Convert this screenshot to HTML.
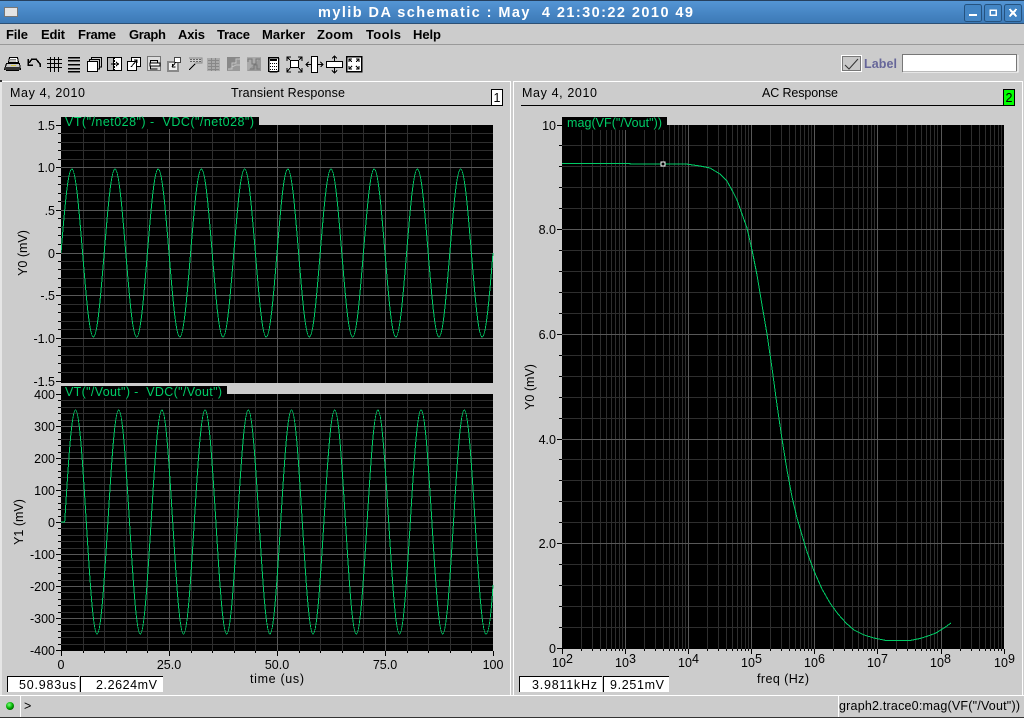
<!DOCTYPE html>
<html><head><meta charset="utf-8"><title>mylib DA schematic</title>
<style>
html,body{margin:0;padding:0;background:#ccc;width:1024px;height:718px;overflow:hidden}
svg{display:block}
text{font-family:"Liberation Sans",sans-serif;font-size:12.5px;fill:#000;white-space:pre}
.m{font-weight:bold;font-size:13px}
.g{fill:#00cc66;font-size:12.500px}
.r{text-anchor:end}
.c{text-anchor:middle}
</style></head><body>
<svg width="1024" height="718" viewBox="0 0 1024 718" xmlns="http://www.w3.org/2000/svg">
<defs><linearGradient id="tb" x1="0" y1="0" x2="0" y2="1"><stop offset="0" stop-color="#5596d6"/><stop offset="1" stop-color="#3b78b5"/></linearGradient>
<radialGradient id="led" cx=".4" cy=".35" r=".7"><stop offset="0" stop-color="#7dff7d"/><stop offset=".6" stop-color="#00b000"/><stop offset="1" stop-color="#005500"/></radialGradient>
<clipPath id="cl"><rect x="61" y="125" width="433" height="526"/></clipPath></defs>
<rect width="1024" height="718" fill="#cccccc"/>

<!-- title bar -->
<rect width="1024" height="24" fill="url(#tb)"/>
<rect width="1024" height="1" fill="#26405e"/>
<rect y="23" width="1024" height="1" fill="#2c4f74"/>
<rect x="4.5" y="7.5" width="13" height="9" fill="#e4e4e4" stroke="#777" shape-rendering="crispEdges"/>
<text x="318" y="17" textLength="375" style="font-weight:bold;font-size:14.500px;fill:#fff">mylib DA schematic : May  4 21:30:22 2010 49</text>
<g fill="#4385c4" stroke="#25527f">
<rect x="964.5" y="4.5" width="17" height="17" rx="2"/><rect x="984.5" y="4.5" width="17" height="17" rx="2"/><rect x="1004.5" y="4.5" width="17" height="17" rx="2"/></g>
<g shape-rendering="crispEdges">
<rect x="969" y="14" width="8" height="2" fill="#fff"/>
<rect x="990" y="10" width="6" height="5" fill="none" stroke="#fff" stroke-width="1.5"/>
<path d="M1009.5 9L1016.5 16.500M1016.5 9L1009.500 16.500" stroke="#fff" stroke-width="2"/>
</g>

<!-- menu -->
<text class="m" x="6" y="39" textLength="22">File</text>
<text class="m" x="41" y="39" textLength="24">Edit</text>
<text class="m" x="78" y="39" textLength="38">Frame</text>
<text class="m" x="129" y="39" textLength="37">Graph</text>
<text class="m" x="178" y="39" textLength="27">Axis</text>
<text class="m" x="217" y="39" textLength="33">Trace</text>
<text class="m" x="262" y="39" textLength="43">Marker</text>
<text class="m" x="317" y="39" textLength="36">Zoom</text>
<text class="m" x="366" y="39" textLength="35">Tools</text>
<text class="m" x="413" y="39" textLength="28">Help</text>
<rect y="44" width="1024" height="1" fill="#999" shape-rendering="crispEdges"/>

<!-- toolbar icons -->
<g shape-rendering="crispEdges" fill="none" stroke="#000">
<!-- printer -->
<path d="M9.500 57.500H17.500L18.500 62.500H8.500Z" fill="#fff"/><path d="M10 59.500H16M10 61H16" stroke="#888"/><path d="M6.500 63.500H19.500L20.500 69.500H4.500Z" fill="#c8c8c8"/><rect x="5" y="67" width="15" height="3" fill="#333" stroke="none"/><rect x="11" y="65" width="5" height="1" fill="#d8c840" stroke="none"/><path d="M6 70.500H19"/>
<!-- undo -->
<path d="M29 63L32 59H36L40 64V67" stroke-width="1.500"/><path d="M28 59V65H33" stroke-width="1.500"/>
<!-- grid -->
<path d="M50.500 57V72M54.500 57V72M58.500 57V72M47 59.500H62M47 63.500H62M47 67.500H62" stroke-width="1"/>
<!-- list -->
<path d="M68 57.500H80M68 60.500H80M68 64.500H80M68 68.500H80M68 71.500H80" stroke-width="1.500"/>
<!-- stack -->
<rect x="87.500" y="61.500" width="10" height="10" fill="#fff" stroke-width="1"/><path d="M89.500 61V59.500H99.500V69H98M91.500 59V57.500H101.500V67H100"/>
<!-- split -->
<rect x="107.500" y="57.500" width="14" height="13" fill="#fff"/><path d="M114.500 57V71" stroke-dasharray="2 1"/><rect x="107" y="58" width="6" height="13" fill="#bbb" stroke="none"/><rect x="107.500" y="57.500" width="6" height="13"/><path d="M111 64H118M116 62L118.500 64L116 66"/>
<!-- 127 -->
<rect x="131.500" y="57.500" width="9" height="9" fill="#fff"/><rect x="127.500" y="61.500" width="9" height="9" fill="#fff"/><path d="M131 67L137 60M134 60H137V63"/>
<!-- 147 -->
<rect x="147.500" y="56.500" width="13" height="14" stroke="#777" stroke-width="1" fill="#ddd"/><path d="M150.500 62.500V60.500H157.500V62.500M150.500 66V69H157.500"/><rect x="150" y="63" width="10" height="3" fill="#fff"/>
<!-- 167 -->
<rect x="168" y="62" width="10" height="9" fill="#eee" stroke="#888" stroke-width="2"/><rect x="174.500" y="57.500" width="6" height="5" fill="#fff" stroke="#444"/><path d="M172 67L176 62M172.500 64V67H175.500"/>
<!-- 188 -->
<path d="M189 58H202V63H195" stroke="#888"/><path d="M190.500 59.500H191.500M193.500 59.500H194.500M196.500 59.500H197.500M199.500 59.500H200.500M190.500 61.500H191.500M193.500 61.500H194.500M196.500 61.500H197.500M199.500 61.500H200.500" stroke-width="1"/><path d="M195 64L189 70" stroke-width="1"/>
<!-- disabled -->
<rect x="207" y="58" width="13" height="13" fill="#aaa" stroke="none"/><path d="M208 60.500H219M208 63.500H219M208 66.500H219M208 69.500H219M211.500 58V71M215.500 58V71" stroke="#888"/>
<path d="M227 71L240 57V71Z" fill="#999" stroke="none"/><path d="M227 71V57H240Z" fill="#888" stroke="none"/><path d="M228 69H232V63H236V59H240M232 67L236 65H240" stroke="#c4c4c4"/>
<path d="M247 71L261 57V71Z" fill="#999" stroke="none"/><path d="M247 71V57H261Z" fill="#aaa" stroke="none"/><path d="M248 62V59H252V64H256V59H260M250 69H254V65H257V69H260" stroke="#777"/>
<!-- calc -->
<rect x="268.500" y="57.500" width="10" height="14" rx="1" fill="#fff" stroke-width="1.500"/><rect x="270" y="59" width="7" height="2" fill="#000" stroke="none"/><path d="M270 63.500H277M270 66.500H277M270 69.500H277" stroke-dasharray="1 1"/><rect x="279" y="59" width="1" height="13" fill="#999" stroke="none"/>
<!-- zoom arrows -->
<rect x="290.500" y="60.500" width="8" height="7" fill="#fff" stroke-width="1"/><path d="M290 60L287 57M299 60L302 57M290 68L287 72M299 68L302 72M287 61V57H291M298 57H302V61M287 68V72H291M298 72H302V68"/>
<rect x="311.500" y="56.500" width="6" height="16" fill="#fff" stroke-width="1"/><path d="M306 64.500H311M318 64.500H323M308.500 62L306 64.500L308.500 67M320.500 62L323 64.500L320.500 67"/>
<rect x="326.500" y="61.500" width="16" height="6" fill="#fff" stroke-width="1"/><path d="M334.500 56V61M334.500 68V73M332 58.500L334.500 56L337 58.500M332 70.500L334.500 73L337 70.500"/>
<rect x="346.500" y="56.500" width="15" height="15" fill="#fff" stroke-width="1.500"/><path d="M349 59L352 62M359 59L356 62M349 69L352 66M359 69L356 66" /><path d="M349 62V59H352M356 59H359V62M349 66V69H352M356 69H359V66" />
</g>

<!-- label checkbox -->
<g shape-rendering="crispEdges">
<rect x="841.500" y="55.500" width="20" height="16" fill="#ccc" stroke="#fff"/>
<rect x="842.500" y="56.500" width="18" height="14" fill="#c8c8c8" stroke="#777"/>
<rect x="902.500" y="54.500" width="114" height="17" fill="#fff" stroke="#777"/>
<path d="M903 72H1018V55" stroke="#fff" fill="none"/>
</g>
<path d="M845 65L849 69L858 59" fill="none" stroke="#333" stroke-width="1"/>
<text x="864" y="68" textLength="33" style="font-weight:bold;font-size:12.500px;fill:#666699">Label</text>

<!-- panel frames -->
<g shape-rendering="crispEdges" fill="none" stroke="#fff">
<path d="M1 695V81.500H510.500V695"/>
<path d="M513.500 695V81.500H1022.500V695"/>
<path d="M0 695.500H1024"/>
<path d="M20.500 696V717M838.500 696V717"/>
</g>
<rect y="717" width="1024" height="1" fill="#333"/>
<rect x="0" y="80" width="2" height="2" fill="#333" shape-rendering="crispEdges"/>

<!-- headers -->
<text x="10" y="97" textLength="75">May 4, 2010</text>
<text x="231" y="97" textLength="114">Transient Response</text>
<text x="522" y="97" textLength="75">May 4, 2010</text>
<text x="762" y="97" textLength="76">AC Response</text>
<g shape-rendering="crispEdges">
<path d="M10 105.500H503M521 105.500H1015" stroke="#000" fill="none"/>
<rect x="491.500" y="89.500" width="11" height="16" fill="#fff" stroke="#000"/>
<rect x="1003.500" y="89.500" width="11" height="16" fill="#00ff00" stroke="#000"/>
</g>
<text x="497" y="102" class="c">1</text>
<text x="1009" y="102" class="c">2</text>

<!-- plots -->
<g shape-rendering="crispEdges">
<rect x="61" y="125" width="432" height="258" fill="#000"/>
<rect x="61" y="394" width="432" height="257" fill="#000"/>
<rect x="562" y="125" width="442" height="524" fill="#000"/>
<g fill="none" stroke="#2e2e2e">
<path d="M83.500 125V383M104.500 125V383M126.500 125V383M147.500 125V383M191.500 125V383M212.500 125V383M234.500 125V383M255.500 125V383M299.500 125V383M320.500 125V383M342.500 125V383M363.500 125V383M407.500 125V383M428.500 125V383M450.500 125V383M471.500 125V383"/>
<path d="M83.500 394V651M104.500 394V651M126.500 394V651M147.500 394V651M191.500 394V651M212.500 394V651M234.500 394V651M255.500 394V651M299.500 394V651M320.500 394V651M342.500 394V651M363.500 394V651M407.500 394V651M428.500 394V651M450.500 394V651M471.500 394V651"/>
<path d="M61 133.500H493M61 142.500H493M61 150.500H493M61 159.500H493M61 176.500H493M61 184.500H493M61 193.500H493M61 201.500H493M61 218.500H493M61 227.500H493M61 235.500H493M61 244.500H493M61 261.500H493M61 269.500H493M61 278.500H493M61 287.500H493M61 304.500H493M61 312.500H493M61 321.500H493M61 329.500H493M61 346.500H493M61 355.500H493M61 363.500H493M61 372.500H493"/>
<path d="M61 400.500H493M61 407.500H493M61 413.500H493M61 420.500H493M61 432.500H493M61 439.500H493M61 445.500H493M61 452.500H493M61 464.500H493M61 471.500H493M61 477.500H493M61 484.500H493M61 496.500H493M61 503.500H493M61 509.500H493M61 516.500H493M61 528.500H493M61 535.500H493M61 541.500H493M61 548.500H493M61 560.500H493M61 567.500H493M61 573.500H493M61 580.500H493M61 592.500H493M61 599.500H493M61 605.500H493M61 612.500H493M61 624.500H493M61 631.500H493M61 637.500H493M61 644.500H493"/>
<path d="M581.500 125V649M592.500 125V649M600.500 125V649M606.500 125V649M611.500 125V649M615.500 125V649M619.500 125V649M622.500 125V649M644.500 125V649M655.500 125V649M663.500 125V649M669.500 125V649M674.500 125V649M678.500 125V649M682.500 125V649M685.500 125V649M707.500 125V649M718.500 125V649M726.500 125V649M732.500 125V649M737.500 125V649M741.500 125V649M745.500 125V649M748.500 125V649M770.500 125V649M781.500 125V649M789.500 125V649M795.500 125V649M800.500 125V649M804.500 125V649M808.500 125V649M811.500 125V649M833.500 125V649M844.500 125V649M852.500 125V649M858.500 125V649M863.500 125V649M867.500 125V649M871.500 125V649M874.500 125V649M896.500 125V649M907.500 125V649M915.500 125V649M921.500 125V649M926.500 125V649M930.500 125V649M934.500 125V649M937.500 125V649M960.500 125V649M971.500 125V649M979.500 125V649M985.500 125V649M990.500 125V649M994.500 125V649M998.500 125V649M1001.500 125V649"/>
<path d="M562 145.500H1004M562 166.500H1004M562 187.500H1004M562 208.500H1004M562 250.500H1004M562 271.500H1004M562 292.500H1004M562 313.500H1004M562 355.500H1004M562 376.500H1004M562 397.500H1004M562 418.500H1004M562 459.500H1004M562 480.500H1004M562 501.500H1004M562 522.500H1004M562 564.500H1004M562 585.500H1004M562 606.500H1004M562 627.500H1004"/>
</g>
<g fill="none" stroke="#585858">
<path d="M169.500 125V383M277.500 125V383M385.500 125V383M169.500 394V651M277.500 394V651M385.500 394V651"/>
<path d="M61 167.500H493M61 210.500H493M61 253.500H493M61 295.500H493M61 338.500H493"/>
<path d="M61 426.500H493M61 458.500H493M61 490.500H493M61 522.500H493M61 554.500H493M61 586.500H493M61 618.500H493"/>
<path d="M625.500 125V649M688.500 125V649M751.500 125V649M814.500 125V649M877.500 125V649M941.500 125V649"/>
<path d="M562 229.500H1004M562 334.500H1004M562 439.500H1004M562 543.500H1004"/>
</g>

<!-- ticks -->
<g fill="none" stroke="#000">
<path d="M56 125.500H61M56 167.500H61M56 210.500H61M56 253.500H61M56 295.500H61M56 338.500H61M56 381.500H61"/>
<path d="M58 133.500H61M58 142.500H61M58 150.500H61M58 159.500H61M58 176.500H61M58 184.500H61M58 193.500H61M58 201.500H61M58 218.500H61M58 227.500H61M58 235.500H61M58 244.500H61M58 261.500H61M58 269.500H61M58 278.500H61M58 287.500H61M58 304.500H61M58 312.500H61M58 321.500H61M58 329.500H61M58 346.500H61M58 355.500H61M58 363.500H61M58 372.500H61"/>
<path d="M56 394.500H61M56 426.500H61M56 458.500H61M56 490.500H61M56 522.500H61M56 554.500H61M56 586.500H61M56 618.500H61M56 650.500H61"/>
<path d="M58 400.500H61M58 407.500H61M58 413.500H61M58 420.500H61M58 432.500H61M58 439.500H61M58 445.500H61M58 452.500H61M58 464.500H61M58 471.500H61M58 477.500H61M58 484.500H61M58 496.500H61M58 503.500H61M58 509.500H61M58 516.500H61M58 528.500H61M58 535.500H61M58 541.500H61M58 548.500H61M58 560.500H61M58 567.500H61M58 573.500H61M58 580.500H61M58 592.500H61M58 599.500H61M58 605.500H61M58 612.500H61M58 624.500H61M58 631.500H61M58 637.500H61M58 644.500H61"/>
<path d="M61.500 651V656M169.500 651V656M277.500 651V656M385.500 651V656M493.500 651V656"/>
<path d="M83.500 651V653M104.500 651V653M126.500 651V653M147.500 651V653M191.500 651V653M212.500 651V653M234.500 651V653M255.500 651V653M299.500 651V653M320.500 651V653M342.500 651V653M363.500 651V653M407.500 651V653M428.500 651V653M450.500 651V653M471.500 651V653"/>
<path d="M557 125.500H562M557 229.500H562M557 334.500H562M557 439.500H562M557 543.500H562M557 648.500H562"/>
<path d="M559 145.500H562M559 166.500H562M559 187.500H562M559 208.500H562M559 250.500H562M559 271.500H562M559 292.500H562M559 313.500H562M559 355.500H562M559 376.500H562M559 397.500H562M559 418.500H562M559 459.500H562M559 480.500H562M559 501.500H562M559 522.500H562M559 564.500H562M559 585.500H562M559 606.500H562M559 627.500H562"/>
<path d="M562.500 649V654M625.500 649V654M688.500 649V654M751.500 649V654M814.500 649V654M877.500 649V654M941.500 649V654M1004.500 649V654"/>
<path d="M581.500 649V651M592.500 649V651M600.500 649V651M606.500 649V651M611.500 649V651M615.500 649V651M619.500 649V651M622.500 649V651M644.500 649V651M655.500 649V651M663.500 649V651M669.500 649V651M674.500 649V651M678.500 649V651M682.500 649V651M685.500 649V651M707.500 649V651M718.500 649V651M726.500 649V651M732.500 649V651M737.500 649V651M741.500 649V651M745.500 649V651M748.500 649V651M770.500 649V651M781.500 649V651M789.500 649V651M795.500 649V651M800.500 649V651M804.500 649V651M808.500 649V651M811.500 649V651M833.500 649V651M844.500 649V651M852.500 649V651M858.500 649V651M863.500 649V651M867.500 649V651M871.500 649V651M874.500 649V651M896.500 649V651M907.500 649V651M915.500 649V651M921.500 649V651M926.500 649V651M930.500 649V651M934.500 649V651M937.500 649V651M960.500 649V651M971.500 649V651M979.500 649V651M985.500 649V651M990.500 649V651M994.500 649V651M998.500 649V651M1001.500 649V651"/>
</g>

<!-- traces -->
<g fill="none" stroke="#00cc66" stroke-width="1">
<g clip-path="url(#cl)">
<path d="M61 253
c3.52-43 6.89-84 10.8-84c3.91 0 7.28 41 10.8 84c3.52 43 6.89 84 10.8 84c3.91 0 7.28-41 10.8-84
c3.52-43 6.89-84 10.8-84c3.91 0 7.28 41 10.8 84c3.52 43 6.89 84 10.8 84c3.91 0 7.28-41 10.8-84
c3.52-43 6.89-84 10.8-84c3.91 0 7.28 41 10.8 84c3.52 43 6.89 84 10.8 84c3.91 0 7.28-41 10.8-84
c3.52-43 6.89-84 10.8-84c3.91 0 7.28 41 10.8 84c3.52 43 6.89 84 10.8 84c3.91 0 7.28-41 10.8-84
c3.52-43 6.89-84 10.8-84c3.91 0 7.28 41 10.8 84c3.52 43 6.89 84 10.8 84c3.91 0 7.28-41 10.8-84
c3.52-43 6.89-84 10.8-84c3.91 0 7.28 41 10.8 84c3.52 43 6.89 84 10.8 84c3.91 0 7.28-41 10.8-84
c3.52-43 6.89-84 10.8-84c3.91 0 7.28 41 10.8 84c3.52 43 6.89 84 10.8 84c3.91 0 7.28-41 10.8-84
c3.52-43 6.89-84 10.8-84c3.91 0 7.28 41 10.8 84c3.52 43 6.89 84 10.8 84c3.91 0 7.28-41 10.8-84
c3.52-43 6.89-84 10.8-84c3.91 0 7.28 41 10.8 84c3.52 43 6.89 84 10.8 84c3.91 0 7.28-41 10.8-84
c3.52-43 6.89-84 10.8-84c3.91 0 7.28 41 10.8 84c3.52 43 6.89 84 10.8 84c3.91 0 7.28-41 10.8-84"/>
<path d="M61 522L64.7 522
c3.52-57.4 6.89-112 10.8-112c3.91 0 7.28 54.6 10.8 112c3.52 57.4 6.89 112 10.8 112c3.91 0 7.28-54.6 10.8-112
c3.52-57.4 6.89-112 10.8-112c3.91 0 7.28 54.6 10.8 112c3.52 57.4 6.89 112 10.8 112c3.91 0 7.28-54.6 10.8-112
c3.52-57.4 6.89-112 10.8-112c3.91 0 7.28 54.6 10.8 112c3.52 57.4 6.89 112 10.8 112c3.91 0 7.28-54.6 10.8-112
c3.52-57.4 6.89-112 10.8-112c3.91 0 7.28 54.6 10.8 112c3.52 57.4 6.89 112 10.8 112c3.91 0 7.28-54.6 10.8-112
c3.52-57.4 6.89-112 10.8-112c3.91 0 7.28 54.6 10.8 112c3.52 57.4 6.89 112 10.8 112c3.91 0 7.28-54.6 10.8-112
c3.52-57.4 6.89-112 10.8-112c3.91 0 7.28 54.6 10.8 112c3.52 57.4 6.89 112 10.8 112c3.91 0 7.28-54.6 10.8-112
c3.52-57.4 6.89-112 10.8-112c3.91 0 7.28 54.6 10.8 112c3.52 57.4 6.89 112 10.8 112c3.91 0 7.28-54.6 10.8-112
c3.52-57.4 6.89-112 10.8-112c3.91 0 7.28 54.6 10.8 112c3.52 57.4 6.89 112 10.8 112c3.91 0 7.28-54.6 10.8-112
c3.52-57.4 6.89-112 10.8-112c3.91 0 7.28 54.6 10.8 112c3.52 57.4 6.89 112 10.8 112c3.91 0 7.28-54.6 10.8-112
c3.52-57.4 6.89-112 10.8-112c3.91 0 7.28 54.6 10.8 112c3.52 57.4 6.89 112 10.8 112
Q490 634 493 585"/>
</g>
<path d="M562 163.500H630V164H686L700 166L710 168L720 174L727 181L733 192L737 200L742 214L747 228L752 250L757 275L762 305L767 334L772 368L777 405L782 439L787 470L792 497L797 518L802 535L807 552L814 571L822 589L830 603L838 614L846 623L854 630L864 635L874 638L886 640.500H910L920 638.500L928 636L936 633L944 628L951 623"/>
</g>
<rect x="661" y="162" width="4" height="4" fill="#000" stroke="#fff"/>

<!-- label backgrounds -->
<rect x="61" y="117" width="198" height="12" fill="#000"/>
<rect x="61" y="386" width="166" height="12" fill="#000"/>
<rect x="562" y="117" width="105" height="13" fill="#000"/>

<!-- readouts -->
<rect x="7" y="676" width="72" height="16" fill="#fff"/>
<rect x="80" y="676" width="83" height="16" fill="#fff"/>
<rect x="519" y="676" width="83" height="16" fill="#fff"/>
<rect x="603" y="676" width="66" height="16" fill="#fff"/>
<path d="M7.500 692V676.500H79M80.500 692V676.500H163M519.500 692V676.500H602M603.500 692V676.500H669" fill="none" stroke="#000"/>
</g>

<text class="g" x="65" y="126" textLength="189">VT("/net028") -  VDC("/net028")</text>
<text class="g" x="65" y="396" textLength="157">VT("/Vout") -  VDC("/Vout")</text>
<text class="g" x="567" y="127" textLength="95">mag(VF("/Vout"))</text>

<text class="r" x="55" y="130">1.5</text>
<text class="r" x="55" y="172">1.0</text>
<text class="r" x="55" y="215">.5</text>
<text class="r" x="55" y="258">0</text>
<text class="r" x="55" y="300">-.5</text>
<text class="r" x="55" y="343">-1.0</text>
<text class="r" x="55" y="386">-1.5</text>
<text class="r" x="55" y="399">400</text>
<text class="r" x="55" y="431">300</text>
<text class="r" x="55" y="463">200</text>
<text class="r" x="55" y="495">100</text>
<text class="r" x="55" y="527">0</text>
<text class="r" x="55" y="559">-100</text>
<text class="r" x="55" y="591">-200</text>
<text class="r" x="55" y="623">-300</text>
<text class="r" x="55" y="655">-400</text>

<text class="c" x="61" y="669">0</text>
<text class="c" x="169" y="669">25.0</text>
<text class="c" x="277" y="669">50.0</text>
<text class="c" x="385" y="669">75.0</text>
<text class="c" x="493" y="669">100</text>
<text class="c" x="277" y="683" textLength="54">time (us)</text>

<text class="r" x="556" y="130">10</text>
<text class="r" x="556" y="234">8.0</text>
<text class="r" x="556" y="339">6.0</text>
<text class="r" x="556" y="444">4.0</text>
<text class="r" x="556" y="548">2.0</text>
<text class="r" x="556" y="653">0</text>

<text x="552" y="667">10</text><text x="566" y="663">2</text>
<text x="615" y="667">10</text><text x="629" y="663">3</text>
<text x="678" y="667">10</text><text x="692" y="663">4</text>
<text x="741" y="667">10</text><text x="755" y="663">5</text>
<text x="804" y="667">10</text><text x="818" y="663">6</text>
<text x="867" y="667">10</text><text x="881" y="663">7</text>
<text x="930" y="667">10</text><text x="944" y="663">8</text>
<text x="994" y="667">10</text><text x="1008" y="663">9</text>
<text class="c" x="783" y="683" textLength="52">freq (Hz)</text>

<text transform="translate(27,253) rotate(-90)" class="c">Y0 (mV)</text>
<text transform="translate(23,522) rotate(-90)" class="c">Y1 (mV)</text>
<text transform="translate(534,387) rotate(-90)" class="c">Y0 (mV)</text>

<text x="19" y="689" textLength="57">50.983us</text>
<text x="96" y="689" textLength="61">2.2624mV</text>
<text x="532" y="689" textLength="65">3.9811kHz</text>
<text x="610" y="689" textLength="54">9.251mV</text>

<circle cx="10" cy="706" r="4" fill="url(#led)"/>
<text x="24" y="710">&gt;</text>
<text x="839" y="710" textLength="181">graph2.trace0:mag(VF("/Vout"))</text>
</svg>
</body></html>
